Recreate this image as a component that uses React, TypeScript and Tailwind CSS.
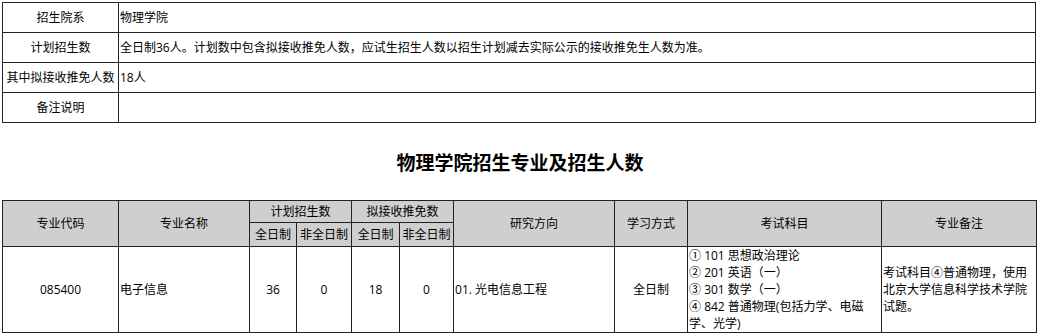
import React from 'react';

const font = { fontFamily: '"Open Sans", "Noto Sans CJK SC", sans-serif' };

const infoRows: [string, string][] = [
    ['招生院系', '物理学院'],
    ['计划招生数', '全日制36人。计划数中包含拟接收推免人数，应试生招生人数以招生计划减去实际公示的接收推免生人数为准。'],
    ['其中拟接收推免人数', '18人'],
    ['备注说明', ''],
];

const exams = ['① 101 思想政治理论', '② 201 英语（一）', '③ 301 数学（一）', '④ 842 普通物理(包括力学、电磁学、光学)'];

export default function App() {
    const cell = 'border border-[#222] p-0';
    const head = 'border border-[#222] bg-[#cfcfcf] p-0 text-center font-normal';

    return (
        <div className="min-h-screen bg-white pl-[2px] pt-[2px] text-[12px] text-black" style={font}>
            {/* 院系信息 */}
            <table className="w-[1034px] table-fixed border-collapse">
                <colgroup>
                    <col className="w-[116px]" />
                    <col />
                </colgroup>
                <tbody>
                    {infoRows.map(([k, v]) => (
                        <tr key={k} className="h-[30px]">
                            <td className={`${cell} text-center`}>{k}</td>
                            <td className={`${cell} pl-[1px]`}>{v}</td>
                        </tr>
                    ))}
                </tbody>
            </table>

            <div className="flex h-[77px] items-center justify-center pt-[3px]">
                <h2 className="text-[19px] font-bold leading-[22px]">物理学院招生专业及招生人数</h2>
            </div>

            {/* 招生专业表 */}
            <table className="w-[1034px] table-fixed border-collapse leading-[17px]">
                <colgroup>
                    <col className="w-[116px]" />
                    <col className="w-[131px]" />
                    <col className="w-[47px]" />
                    <col className="w-[55px]" />
                    <col className="w-[48px]" />
                    <col className="w-[54px]" />
                    <col className="w-[161px]" />
                    <col className="w-[73px]" />
                    <col className="w-[194px]" />
                    <col className="w-[155px]" />
                </colgroup>
                <thead>
                    <tr className="h-[22px]">
                        <th rowSpan={2} className={head}>专业代码</th>
                        <th rowSpan={2} className={head}>专业名称</th>
                        <th colSpan={2} className={head}>计划招生数</th>
                        <th colSpan={2} className={head}>拟接收推免数</th>
                        <th rowSpan={2} className={head}>研究方向</th>
                        <th rowSpan={2} className={head}>学习方式</th>
                        <th rowSpan={2} className={head}>考试科目</th>
                        <th rowSpan={2} className={head}>专业备注</th>
                    </tr>
                    <tr className="h-[24px]">
                        <th className={head}>全日制</th>
                        <th className={head}>非全日制</th>
                        <th className={head}>全日制</th>
                        <th className={head}>非全日制</th>
                    </tr>
                </thead>
                <tbody>
                    <tr className="h-[85px]">
                        <td className={`${cell} text-center`}>085400</td>
                        <td className={`${cell} pl-[1px]`}>电子信息</td>
                        <td className={`${cell} text-center`}>36</td>
                        <td className={`${cell} text-center`}>0</td>
                        <td className={`${cell} text-center`}>18</td>
                        <td className={`${cell} text-center`}>0</td>
                        <td className={`${cell} pl-[1px]`}>01. 光电信息工程</td>
                        <td className={`${cell} text-center`}>全日制</td>
                        <td className={`${cell} pl-[1px]`}>
                            {exams.map((e) => (
                                <div key={e}>{e}</div>
                            ))}
                        </td>
                        <td className={`${cell} pl-[1px] pr-[4px]`}>考试科目④普通物理，使用北京大学信息科学技术学院试题。</td>
                    </tr>
                </tbody>
            </table>
        </div>
    );
}
